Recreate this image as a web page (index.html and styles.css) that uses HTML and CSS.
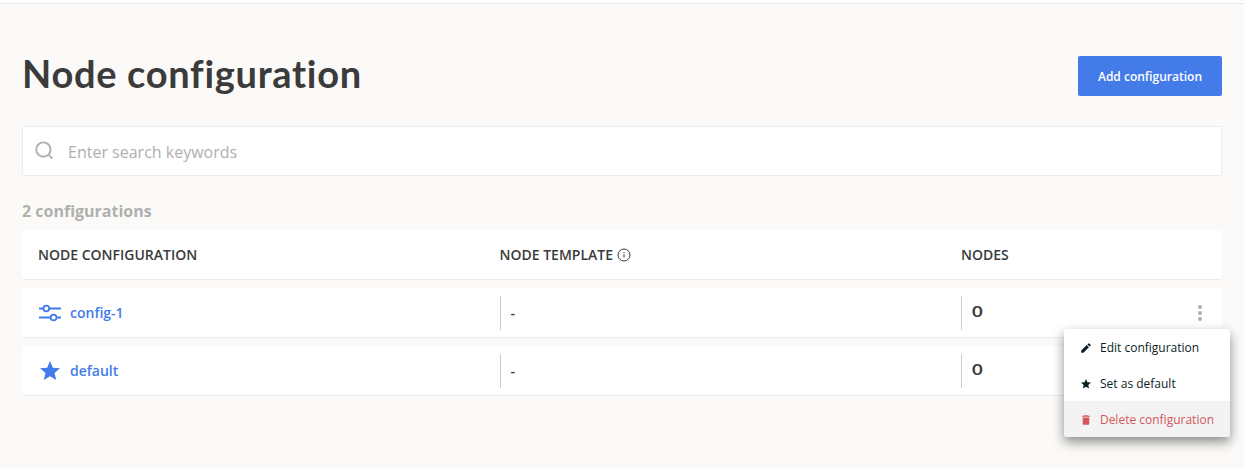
FILE: index.html
```html
<!DOCTYPE html>
<html lang="en">
<head>
<meta charset="utf-8">
<title>Node configuration</title>
<link rel="stylesheet" href="styles.css">
</head>
<body>
<div class="topbar"></div>
<main class="page">
  <header class="head">
    <h1 class="title">Node configuration</h1>
    <button class="add">Add configuration</button>
  </header>
  <label class="search">
    <svg class="search-icon" width="20" height="20" viewBox="0 0 20 20" fill="none" stroke="#b0b0ae" stroke-width="1.9"><circle cx="8.400" cy="8.600" r="7.200"/><path d="M13.600 13.800l3.700 3.700"/></svg>
    <input class="search-input" type="text" placeholder="Enter search keywords">
  </label>
  <p class="count">2 configurations</p>
  <section class="table">
    <div class="row row-head">
      <div class="cell">NODE CONFIGURATION</div>
      <div class="cell">NODE TEMPLATE
        <svg class="info" width="14" height="14" viewBox="0 0 14 14" fill="none" stroke="#3b3b3b"><circle cx="7" cy="7" r="6"/><path d="M7 6.300v3.200M7 4v1.200"/></svg>
      </div>
      <div class="cell">NODES</div>
    </div>
    <div class="row">
      <div class="cell name">
        <svg class="row-icon" width="24" height="20" viewBox="0 0 24 20" fill="none" stroke="#437be9" stroke-width="1.8"><path d="M1 5.500h4.500M11 5.500h12M1 14.500h11.800M18.400 14.500h4.600"/><circle cx="8.300" cy="5.500" r="2.900"/><circle cx="15.600" cy="14.500" r="2.900"/></svg>
        <a class="link">config-1</a>
      </div>
      <div class="cell value"><span class="dash">-</span></div>
      <div class="cell value"><span class="num">0</span></div>
      <svg class="dots" width="6" height="18" viewBox="0 0 6 18" fill="#b0b0ae"><circle cx="3" cy="3" r="2.1"/><circle cx="3" cy="9" r="2.1"/><circle cx="3" cy="15" r="2.1"/></svg>
      <div class="menu">
        <div class="item">
          <svg class="item-icon" width="12" height="12" viewBox="0 0 24 24" fill="#0b1e26"><path d="M2.500 17V21.500h4.500L17.810 10.400l-4.300-4.300L2.500 17zM21.200 7.040a1.200 1.200 0 0 0 0-1.600l-2.600-2.600a1.200 1.200 0 0 0-1.600 0l-2.200 2.100 4.300 4.300 2.100-2.200z"/></svg>
          Edit configuration
        </div>
        <div class="item">
          <svg class="item-icon" width="12" height="12" viewBox="0 0 24 24" fill="#0b1e26"><path d="M12 17.27L18.18 21l-1.64-7.03L22 9.24l-7.19-.61L12 2 9.19 8.63 2 9.24l5.46 4.73L5.82 21z"/></svg>
          Set as default
        </div>
        <div class="item item-danger">
          <svg class="item-icon" width="12" height="12" viewBox="0 0 24 24" fill="#d4555a"><path d="M5.500 19.500c0 1.100.900 2 2 2h9c1.100 0 2-.900 2-2V7h-13v12.500zM20 3.500h-4l-1-1.300H9L8 3.500H4v2.200h16z"/></svg>
          Delete configuration
        </div>
      </div>
    </div>
    <div class="row">
      <div class="cell name">
        <svg class="row-icon" width="24" height="24" viewBox="0 0 24 24" fill="#437be9"><path d="M12 17.27L18.18 21l-1.64-7.03L22 9.24l-7.190-.610L12 2 9.190 8.630 2 9.240l5.460 4.730L5.820 21z"/></svg>
        <a class="link">default</a>
      </div>
      <div class="cell value"><span class="dash">-</span></div>
      <div class="cell value"><span class="num">0</span></div>
    </div>
  </section>
</main>
</body>
</html>
```
FILE: styles.css
```css
* { box-sizing: border-box; }
body {
  margin: 0;
  height: 468px;
  overflow: hidden;
  background: #fbfaf8;
  color: #3b3b3b;
  font-family: "Open Sans", sans-serif;
}
.topbar { height: 4px; background: #fff; border-bottom: 1px solid #e6e7e7; }
.page { padding: 52px 22px 0; }
.head { display: flex; justify-content: space-between; height: 40px; }
.title {
  margin: 0;
  font: 700 38px/34px Lato, sans-serif;
  letter-spacing: 0.7px;
  white-space: nowrap;
}
.add {
  width: 144px;
  height: 40px;
  padding: 0;
  border: 0;
  border-radius: 2px;
  background: #437be9;
  color: #fff;
  font: 600 12px "Open Sans", sans-serif;
}
.search {
  display: flex;
  height: 50px;
  margin-top: 30px;
  padding: 0 12px;
  background: #fff;
  border: 1px solid #ebecec;
  border-radius: 2px;
}
.search-icon { margin-top: 14px; }
.search-input {
  flex: 1;
  margin-left: 13px;
  padding: 1px 0 0;
  border: 0;
  outline: 0;
  background: none;
  font: 400 16px "Open Sans", sans-serif;
}
.search-input::placeholder { color: #b0b0ae; opacity: 1; }
.count { margin: 24px 0 8px; font-size: 16px; font-weight: 700; line-height: 22px; color: #b0b0ae; }
.table { display: grid; gap: 8px; }
.row {
  position: relative;
  display: grid;
  grid-template-columns: 461.5px 461.5px 1fr auto;
  align-items: center;
  height: 50px;
  padding: 0 19px 0 16px;
  background: #fff;
  border-bottom: 1px solid #ebebea;
  border-radius: 3px;
}
.row-head { font-size: 14px; font-weight: 600; }
.row-head .cell { display: flex; align-items: center; gap: 4px; }
.name { display: flex; align-items: center; gap: 8px; }
.link { color: #437be9; font-size: 14px; font-weight: 600; }
.value { display: flex; align-items: center; height: 34px; padding-left: 10px; border-left: 1px solid #ccc; }
.dash { font-size: 14px; font-weight: 600; }
.num { margin-top: -4px; font: 700 16px/20px Lato, sans-serif; transform: scaleX(1.15); transform-origin: left; }
.menu {
  position: absolute;
  z-index: 2;
  top: 41px;
  right: -8px;
  width: 166px;
  background: #fff;
  border-radius: 3px;
  overflow: hidden;
  box-shadow: 0 5px 12px rgba(0,0,0,.45);
  color: #0b1e26;
  font-size: 12px;
}
.item { display: flex; align-items: center; gap: 8px; height: 36px; padding: 0 16px; white-space: nowrap; }
.item-icon { margin-top: 2px; }
.item-danger { background: #f3f3f3; color: #d4555a; }
```
